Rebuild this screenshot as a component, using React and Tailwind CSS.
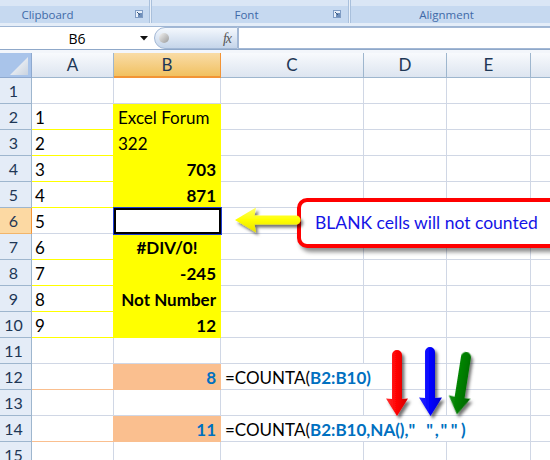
import React from "react";

const YEL = "bg-[#ffff00]";
const PEACH = "bg-[#fabf8f]";

const rows = [
  { n: 1 },
  { n: 2, a: "1", b: "Excel Forum", fill: "y", align: "left" },
  { n: 3, a: "2", b: "322", fill: "y", align: "left" },
  { n: 4, a: "3", b: "703", fill: "y", bold: true },
  { n: 5, a: "4", b: "871", fill: "y", bold: true },
  { n: 6, a: "5", sel: true },
  { n: 7, a: "6", b: "#DIV/0!", fill: "y", bold: true, align: "center" },
  { n: 8, a: "7", b: "-245", fill: "y", bold: true },
  { n: 9, a: "8", b: "Not Number", fill: "y", bold: true },
  { n: 10, a: "9", b: "12", fill: "y", bold: true },
  { n: 11 },
  { n: 12, b: "8", fill: "p", bold: true, blue: true, f: 12 },
  { n: 13 },
  { n: 14, b: "11", fill: "p", bold: true, blue: true, f: 14 },
  { n: 15 },
];

const grid = "border-r border-b border-[#d0d7e5]";

const Launcher = () => (
  <svg width="8" height="8" viewBox="0 0 8 8" className="block">
    <rect x="0.5" y="0.5" width="7" height="7" fill="#e8f0fa" stroke="#7f9cc4" />
    <rect x="3" y="3" width="4" height="4" fill="#6f8fba" />
    <path d="M2 2 L5 5" stroke="#37577f" strokeWidth="1" />
  </svg>
);

const Ribbon = () => (
  <div className="h-[23px] flex bg-[#d6e3f4] font-['Open_Sans',sans-serif] text-[11.5px] text-[#3f6aa8]">
    <div className="w-[149px] flex flex-col">
      <div className="h-[8px] bg-[#dae6f5]" />
      <div className="flex-1 bg-[#c6d9f0] flex items-center">
        <span className="flex-1 text-center pr-[40px]">Clipboard</span>
        <span className="mr-[6px]"><Launcher /></span>
      </div>
    </div>
    <div className="w-[3px] bg-[#e9f0f9] border-l border-r border-[#a9c0dc]" />
    <div className="w-[196px] flex flex-col">
      <div className="h-[8px] bg-[#dae6f5]" />
      <div className="flex-1 bg-[#c6d9f0] flex items-center">
        <span className="flex-1 text-center pl-[8px]">Font</span>
        <span className="mr-[7px]"><Launcher /></span>
      </div>
    </div>
    <div className="w-[3px] bg-[#e9f0f9] border-l border-r border-[#a9c0dc]" />
    <div className="flex-1 flex flex-col">
      <div className="h-[8px] bg-[#dae6f5]" />
      <div className="flex-1 bg-[#c6d9f0] flex items-center">
        <span className="flex-1 text-center pr-[8px]">Alignment</span>
      </div>
    </div>
  </div>
);

const FormulaBar = () => (
  <div>
    <div className="h-[4px] bg-[#e4edf8] border-b border-[#9fb6d4]" />
    <div className="h-[22px] flex bg-white font-['Open_Sans',sans-serif]">
      <div className="w-[154px] flex items-center">
        <span className="flex-1 text-center text-[14px] text-black pl-[14px]">B6</span>
        <svg width="8" height="5" viewBox="0 0 8 5" className="mr-[6px]">
          <path d="M0 0 H8 L4 4.5 Z" fill="#111" />
        </svg>
      </div>
      <div className="w-[84px] flex items-center rounded-l-full bg-gradient-to-b from-[#f4f8fd] to-[#c5d5ea] border border-[#a3b8d5]">
        <span className="ml-[4px] w-[10px] h-[10px] rounded-full bg-gradient-to-br from-[#f4f4f4] to-[#9a9a9a]" />
        <span className="flex-1" />
        <span className="mr-[6px] italic font-['Liberation_Serif',serif] text-[14px] text-[#555] tracking-[-1px]">fx</span>
      </div>
      <div className="flex-1 border-t border-b border-l border-[#a3b8d5]" />
    </div>
    <div className="h-[4px] bg-[#f3f6fb] border-t border-[#8fa8c9]" />
  </div>
);

const Formula12 = () => (
  <span className="whitespace-nowrap">
    =COUNTA(<span className="font-bold text-[#0070c0]">B2:B10)</span>
  </span>
);

const Formula14 = () => (
  <span className="whitespace-nowrap">
    =COUNTA(<span className="font-bold text-[#0070c0]">B2:B10,NA(),</span>
    <span className="font-bold text-[#0070c0] tracking-[3.5px]">" ",""</span>
    <span className="font-bold text-[#0070c0]">)</span>
  </span>
);

const Row = ({ r }) => {
  const fillCls = r.fill === "y" ? YEL : r.fill === "p" ? PEACH : "bg-white";
  const fillBorder =
    r.fill === "y" ? "border-[#ffff00]" : r.fill === "p" ? "border-[#fabf8f]" : "border-[#d0d7e5]";
  const just =
    r.align === "left" ? "justify-start pl-[4px]" : r.align === "center" ? "justify-center" : "justify-end pr-[4px]";
  return (
    <>
      <div
        className={`flex items-center justify-center pr-[4px] text-[16px] text-[#1e3756] border-r border-b ${
          r.sel ? "bg-[#fcd9a3] border-r-[#f29436] border-b-[#f2b56a]" : "bg-[#e4ecf7] border-[#9eb6ce]"
        }`}
      >
        {r.n}
      </div>
      <div className={`flex items-center pl-[3px] pt-[2px] border-b border-[#d0d7e5] border-r ${r.fill ? fillBorder : "border-r-[#d0d7e5]"}`}>
        {r.a}
      </div>
      {r.sel ? (
        <div className="relative z-10 bg-white border-2 border-black ring-1 ring-[#1f3fd6]" />
      ) : (
        <div
          className={`flex items-center pt-[2px] border-r border-b ${fillCls} ${fillBorder} ${just} ${
            r.bold ? "font-bold" : ""
          } ${r.blue ? "text-[#0070c0]" : ""}`}
        >
          {r.b}
        </div>
      )}
      {r.f === 12 ? (
        <>
          <div className={`col-span-2 flex items-center pl-[4px] pt-[2px] ${grid}`}>
            <Formula12 />
          </div>
          <div className={grid} />
        </>
      ) : r.f === 14 ? (
        <div className={`col-span-3 flex items-center pl-[4px] pt-[2px] ${grid}`}>
          <Formula14 />
        </div>
      ) : (
        <>
          <div className={grid} />
          <div className={grid} />
          <div className={grid} />
        </>
      )}
      <div className="border-b border-[#d0d7e5]" />
    </>
  );
};

const Header = () => {
  const col = "flex items-center justify-center text-[17px] text-[#1e3756] border-r border-b border-[#9eb6ce] bg-gradient-to-b from-[#f8fafd] to-[#dde5f0]";
  return (
    <>
      <div className="relative bg-[#a9c4ea] border-r border-b border-[#8ea9cf]">
        <svg width="18" height="18" viewBox="0 0 18 18" className="absolute right-[3px] bottom-[2px]">
          <defs>
            <linearGradient id="corner" x1="0" y1="0" x2="1" y2="1">
              <stop offset="0" stopColor="#ffffff" />
              <stop offset="1" stopColor="#c9d3e0" />
            </linearGradient>
          </defs>
          <path d="M0 18 L18 0 L18 18 Z" fill="url(#corner)" />
        </svg>
      </div>
      <div className={col}>A</div>
      <div className="flex items-center justify-center text-[17px] text-[#1e3756] border-r border-[#f29436] border-b-2 border-b-[#f29436] bg-gradient-to-b from-[#f9dca6] to-[#f1c15f]">
        B
      </div>
      <div className={col}>C</div>
      <div className={col}>D</div>
      <div className={col}>E</div>
      <div className="border-b border-[#9eb6ce] bg-gradient-to-b from-[#f8fafd] to-[#dde5f0]" />
    </>
  );
};

const Overlay = () => (
  <svg width="550" height="460" viewBox="0 0 550 460" className="absolute inset-0 pointer-events-none z-20">
    <defs>
      <filter id="sh" x="-30%" y="-30%" width="160%" height="160%">
        <feDropShadow dx="2.5" dy="3" stdDeviation="1.4" floodColor="#000" floodOpacity="0.55" />
      </filter>
      <linearGradient id="gy" x1="0" y1="0" x2="0" y2="1">
        <stop offset="0" stopColor="#ffff66" />
        <stop offset="0.5" stopColor="#ffff00" />
        <stop offset="1" stopColor="#e8e000" />
      </linearGradient>
      <linearGradient id="gr" x1="0" y1="0" x2="1" y2="0">
        <stop offset="0" stopColor="#ff3030" />
        <stop offset="0.5" stopColor="#ff0000" />
        <stop offset="1" stopColor="#d00000" />
      </linearGradient>
      <linearGradient id="gb" x1="0" y1="0" x2="1" y2="0">
        <stop offset="0" stopColor="#2a2aff" />
        <stop offset="0.5" stopColor="#0000ff" />
        <stop offset="1" stopColor="#0000cc" />
      </linearGradient>
      <linearGradient id="gg" x1="0" y1="0" x2="1" y2="0">
        <stop offset="0" stopColor="#109010" />
        <stop offset="0.5" stopColor="#007d00" />
        <stop offset="1" stopColor="#006400" />
      </linearGradient>
    </defs>
    <path
      d="M235 220 L256 207.5 L254.5 215.5 L296 215.5 A4.5 4.5 0 0 1 296 224.5 L254.5 224.5 L256 232.5 Z"
      fill="url(#gy)"
      filter="url(#sh)"
    />
    <path d="M392 355 A5 5 0 0 1 402 355 L402 399 L408 398.5 L397 416 L386 398.5 L392 399 Z" fill="url(#gr)" filter="url(#sh)" />
    <path d="M425 352 A5 5 0 0 1 435 352 L435 398 L442 397.5 L430.5 416 L419 397.5 L425 398 Z" fill="url(#gb)" filter="url(#sh)" />
    <g transform="translate(466 357) rotate(9)">
      <path d="M-5 0 A5 5 0 0 1 5 0 L5 41 L11 40.5 L0 58 L-11 40.5 L-5 41 Z" fill="url(#gg)" filter="url(#sh)" />
    </g>
  </svg>
);

export default function App() {
  return (
    <div className="relative w-[550px] h-[460px] overflow-hidden bg-white font-['Lato',sans-serif] text-[17px] text-black">
      <Ribbon />
      <FormulaBar />
      <div className="grid grid-cols-[32px_82px_107px_143px_83px_84px_19px] grid-rows-[25px] auto-rows-[26px]">
        <Header />
        {rows.map((r) => (
          <Row key={r.n} r={r} />
        ))}
      </div>
      <div className="absolute left-[297px] top-[198px] w-[280px] h-[50px] z-20 rounded-[10px] border-[4px] border-[#ff0000] bg-white shadow-[3px_4px_4px_rgba(0,0,0,0.45)] flex items-center pl-[14px] text-[17.5px] text-[#1414e6] whitespace-nowrap">
        BLANK cells will not counted
      </div>
      <Overlay />
    </div>
  );
}
